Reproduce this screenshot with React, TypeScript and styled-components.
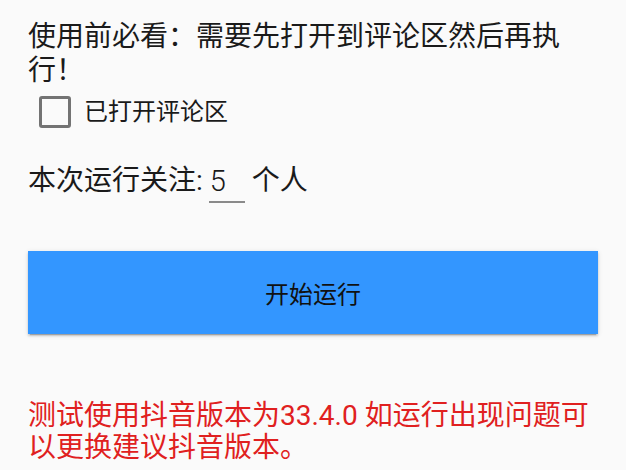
import React, { useState } from 'react';
import styled, { createGlobalStyle } from 'styled-components';

const GlobalStyle = createGlobalStyle`
  html, body {
    margin: 0;
    padding: 0;
    background: #fafafa;
  }

  body {
    font-family: Roboto, "Noto Sans CJK SC", "Noto Sans", sans-serif;
    color: #1a1a1a;
  }
`;

const Page = styled.div`
  width: 626px;
  height: 470px;
  box-sizing: border-box;
  padding: 20px 28px 0;
  display: flex;
  flex-direction: column;
  overflow: hidden;
`;

const Notice = styled.p`
  margin: 0;
  font-size: 28px;
  line-height: 34px;
  color: #1a1a1a;
`;

const CheckRow = styled.label`
  margin-top: 4px;
  height: 40px;
  padding-left: 11px;
  display: flex;
  align-items: center;
  gap: 13px;
  cursor: pointer;
`;

const Box = styled.span<{ $checked: boolean }>`
  width: 32px;
  height: 32px;
  box-sizing: border-box;
  border: 3px solid ${(p) => (p.$checked ? '#3396ff' : '#737373')};
  background: ${(p) => (p.$checked ? '#3396ff' : 'transparent')};
  border-radius: 3px;
  display: flex;
  align-items: center;
  justify-content: center;
`;

const HiddenInput = styled.input`
  display: none;
`;

const CheckLabel = styled.span`
  font-size: 24px;
  line-height: 32px;
`;

const CountRow = styled.div`
  margin-top: 33px;
  display: flex;
  align-items: flex-start;
  font-size: 28px;
  line-height: 32px;
`;

const Field = styled.input`
  width: 35px;
  margin: 0 7px 0 6px;
  padding: 0 0 4px 1px;
  box-sizing: content-box;
  height: 32px;
  border: none;
  border-bottom: 2px solid #8a8a8a;
  background: transparent;
  font: inherit;
  font-size: 29px;
  font-weight: 300;
  line-height: 32px;
  color: #1a1a1a;
  outline: none;
`;

const RunButton = styled.button`
  margin-top: 48px;
  width: 570px;
  height: 83px;
  border: none;
  border-radius: 0;
  background: #3396ff;
  color: #111;
  font-family: inherit;
  font-size: 24px;
  box-shadow: 0 3px 1px -2px rgba(0, 0, 0, 0.2), 0 2px 2px rgba(0, 0, 0, 0.14),
    0 1px 5px rgba(0, 0, 0, 0.12);
  cursor: pointer;
`;

const Warning = styled.p`
  margin: 66px 0 0;
  font-size: 28px;
  line-height: 32px;
  color: #e02020;
`;

const App = () => {
  const [opened, setOpened] = useState(false);
  const [count, setCount] = useState('5');

  return (
    <>
      <GlobalStyle />
      <Page>
        <Notice>使用前必看：需要先打开到评论区然后再执行！</Notice>

        <CheckRow>
          <HiddenInput
            type="checkbox"
            checked={opened}
            onChange={(e) => setOpened(e.target.checked)}
          />
          <Box $checked={opened}>
            {opened && (
              <svg width="22" height="22" viewBox="0 0 24 24">
                <path d="M4 12l5 5L20 6" fill="none" stroke="#fff" strokeWidth="3" />
              </svg>
            )}
          </Box>
          <CheckLabel>已打开评论区</CheckLabel>
        </CheckRow>

        <CountRow>
          <span>本次运行关注:</span>
          <Field value={count} onChange={(e) => setCount(e.target.value)} />
          <span>个人</span>
        </CountRow>

        <RunButton>开始运行</RunButton>

        <Warning>测试使用抖音版本为33.4.0 如运行出现问题可以更换建议抖音版本。</Warning>
      </Page>
    </>
  );
};

export default App;
